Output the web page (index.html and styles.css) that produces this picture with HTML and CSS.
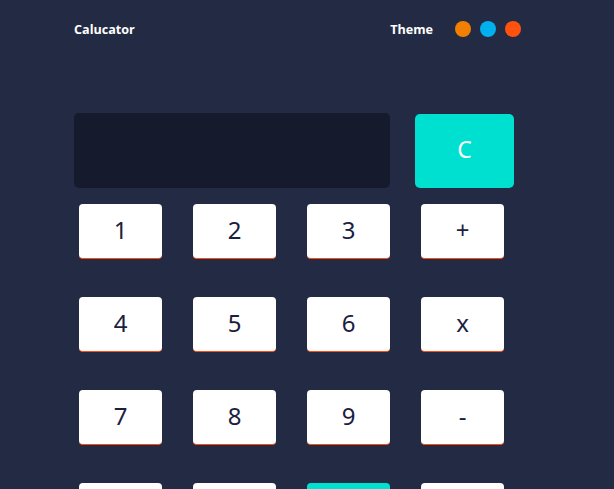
FILE: index.html
```html
<!DOCTYPE html>
<html>
<head>
<meta charset="utf-8">
<link rel="stylesheet" href="styles.css">
</head>
<body>
<div class="app">
  <header class="topbar">
    <div class="brand">Calucator</div>
    <div class="theme">
      <span class="theme-label">Theme</span>
      <span class="dot dot-orange"></span>
      <span class="dot dot-blue"></span>
      <span class="dot dot-red"></span>
    </div>
  </header>
  <main class="calc">
    <div class="screen-row">
      <div class="screen"></div>
      <button class="clear">C</button>
    </div>
    <div class="keys">
      <button class="key">1</button>
      <button class="key">2</button>
      <button class="key">3</button>
      <button class="key">+</button>
      <button class="key">4</button>
      <button class="key">5</button>
      <button class="key">6</button>
      <button class="key">x</button>
      <button class="key">7</button>
      <button class="key">8</button>
      <button class="key">9</button>
      <button class="key">-</button>
      <button class="key" aria-label="0"></button>
      <button class="key" aria-label="."></button>
      <button class="key key-eq" aria-label="="></button>
      <button class="key" aria-label="/"></button>
    </div>
  </main>
</div>
</body>
</html>
```
FILE: styles.css
```css
html, body {
  margin: 0;
  padding: 0;
  background: #232b44;
  overflow: hidden;
}
.app {
  width: 614px;
  height: 489px;
  padding: 0 0 0 74px;
  box-sizing: border-box;
  font-family: "Open Sans", "Noto Sans", sans-serif;
}
.topbar {
  display: flex;
  align-items: center;
  justify-content: space-between;
  width: 447px;
  height: 58px;
}
.brand, .theme-label {
  color: #ffffff;
  font-weight: 700;
  font-size: 12.6px;
}
.theme {
  display: flex;
  align-items: center;
}
.theme-label {
  margin-right: 22px;
}
.dot {
  width: 16px;
  height: 16px;
  border-radius: 50%;
  margin-right: 9px;
}
.dot:last-child { margin-right: 0; }
.dot-orange { background: #f27f00; }
.dot-blue { background: #00b1ee; }
.dot-red { background: #ff520f; }

.calc {
  padding-top: 55px;
}
.screen-row {
  display: flex;
  align-items: flex-end;
  gap: 25px;
}
.screen {
  width: 316px;
  height: 75px;
  background: #151a2c;
  border-radius: 5px;
}
.clear {
  width: 99px;
  height: 74px;
  border: none;
  border-radius: 5px;
  background: #00e0d0;
  color: #ffffff;
  font-family: "Noto Sans", sans-serif;
  font-size: 23px;
  padding: 0 0 4px 0;
}
.keys {
  display: grid;
  grid-template-columns: repeat(4, 83px);
  column-gap: 31px;
  row-gap: 38px;
  margin: 16px 0 0 5px;
}
.key {
  height: 55px;
  border: none;
  border-bottom: 1.5px solid #ff4a10;
  border-radius: 4px;
  background: #ffffff;
  color: #1c2040;
  font-family: "Noto Sans", sans-serif;
  font-size: 24px;
  padding: 0 0 3px 0;
}
.key-eq {
  background: #00e0d0;
  border-bottom-color: #00e0d0;
}
```
